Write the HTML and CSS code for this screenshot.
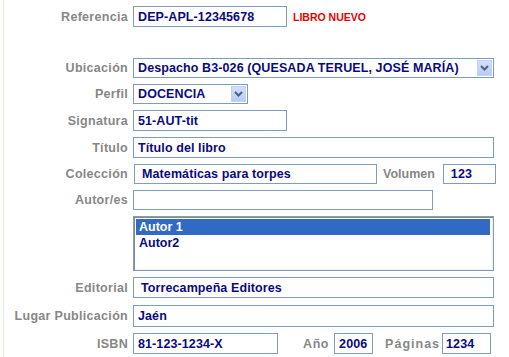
FILE: index.html
```html
<!DOCTYPE html>
<html lang="es">
<head>
    <meta charset="UTF-8">
    <meta name="viewport" content="width=device-width, initial-scale=1.0">
    <title>Ficha de libro</title>

    <link rel="stylesheet" href="styles.css">
</head>
<body>

    <div class="page">
        <form class="ficha">

            <div class="row row_ref">
                <label class="lbl">Referencia</label>
                <div class="field w_short">DEP-APL-12345678</div>
                <span class="nuevo">LIBRO NUEVO</span>
            </div>

            <div class="row row_sel">
                <label class="lbl">Ubicación</label>
                <div class="field select w_full">
                    <span class="select_text">Despacho B3-026 (QUESADA TERUEL, JOSÉ MARÍA)</span>
                    <span class="select_btn">
                        <svg width="9" height="6" viewBox="0 0 9 6"><path d="M1 1 L4.5 4.5 L8 1" fill="none" stroke="#4d6185" stroke-width="2"/></svg>
                    </span>
                </div>
            </div>

            <div class="row row_sel">
                <label class="lbl">Perfil</label>
                <div class="field select w_perfil">
                    <span class="select_text">DOCENCIA</span>
                    <span class="select_btn">
                        <svg width="9" height="6" viewBox="0 0 9 6"><path d="M1 1 L4.5 4.5 L8 1" fill="none" stroke="#4d6185" stroke-width="2"/></svg>
                    </span>
                </div>
            </div>

            <div class="row">
                <label class="lbl">Signatura</label>
                <div class="field w_short">51-AUT-tit</div>
            </div>

            <div class="row">
                <label class="lbl">Título</label>
                <div class="field w_full">Título del libro</div>
            </div>

            <div class="row row_sel">
                <label class="lbl">Colección</label>
                <div class="field w_coleccion pad">Matemáticas para torpes</div>
                <label class="lbl_inline lbl_vol">Volumen</label>
                <div class="field w_vol pad">123</div>
            </div>

            <div class="row row_sel">
                <label class="lbl">Autor/es</label>
                <div class="field w_autor"></div>
            </div>

            <div class="row row_list">
                <label class="lbl"></label>
                <div class="listbox w_full">
                    <div class="opt opt_sel">Autor 1</div>
                    <div class="opt">Autor2</div>
                </div>
            </div>

            <div class="row">
                <label class="lbl">Editorial</label>
                <div class="field w_full pad">Torrecampeña Editores</div>
            </div>

            <div class="row row_tall">
                <label class="lbl">Lugar Publicación</label>
                <div class="field w_full">Jaén</div>
            </div>

            <div class="row">
                <label class="lbl">ISBN</label>
                <div class="field w_isbn">81-123-1234-X</div>
                <label class="lbl_inline lbl_anio">Año</label>
                <div class="field w_anio">2006</div>
                <label class="lbl_inline lbl_pag">Páginas</label>
                <div class="field w_pag">1234</div>
            </div>

        </form>
    </div>

</body>
</html>
```

FILE: styles.css
```css
*,*::after,*::before{
    box-sizing: border-box;
    margin: 0;
    padding: 0;
}

body{
    background-color: #ffffff;
    padding-left: 3px;
    font-family: "Liberation Sans", Arial, sans-serif;
}

.page{
    border-left: 1px solid #ecece0;
    min-height: 357px;
    padding-top: 6px;
}

.ficha{
    display: flex;
    flex-direction: column;
    gap: 6px;
}

.row{
    display: flex;
    align-items: center;
    height: 21px;
}

.row_ref{
    margin-bottom: 25px;
}

.row_sel{
    height: 20px;
}

.row_tall{
    height: 22px;
    margin-top: 1px;
}

.row_list{
    height: 55px;
    align-items: stretch;
}

.lbl{
    flex: none;
    width: 125px;
    margin-right: 4px;
    padding-right: 1px;
    text-align: right;
    font-size: 12.5px;
    font-weight: bold;
    letter-spacing: 0.3px;
    color: #878787;
}

.lbl_inline{
    flex: none;
    font-size: 12.5px;
    font-weight: bold;
    letter-spacing: 0.1px;
    color: #878787;
}

.field{
    flex: none;
    height: 100%;
    border: 1px solid #7f9db9;
    background-color: #ffffff;
    padding-left: 4px;
    display: flex;
    align-items: center;
    font-size: 12.5px;
    font-weight: bold;
    letter-spacing: 0.1px;
    color: #0a0a80;
    white-space: nowrap;
    overflow: hidden;
}

.pad{
    padding-left: 7px;
}

.w_short{ width: 154px; }
.w_full{ width: 361px; }
.w_perfil{ width: 115px; }
.w_coleccion{ width: 243px; margin-left: 1px; }
.w_vol{ width: 53px; }
.w_autor{ width: 300px; }
.w_isbn{ width: 145px; }
.w_anio{ width: 39px; }
.w_pag{ width: 49px; padding-left: 3px; }

.lbl_vol{ margin: 0 8px 0 6px; letter-spacing: 0; }
.lbl_anio{ margin: 0 5px 0 25px; letter-spacing: 0.6px; }
.lbl_pag{ margin: 0 2px 0 12px; letter-spacing: 1px; }

.nuevo{
    margin-left: 6px;
    font-size: 10.5px;
    font-weight: bold;
    color: #e60000;
}

.select{
    justify-content: space-between;
    padding-right: 1px;
}

.select_btn{
    width: 15px;
    height: 16px;
    background: linear-gradient(#d3def9, #b8cbf4);
    border: 1px solid #c3d2f5;
    display: flex;
    align-items: center;
    justify-content: center;
}

.listbox{
    flex: none;
    border: 1px solid #7f9db9;
    box-shadow: inset 1px 1px 0 #8a8a8a, inset -1px -1px 0 #f1efe2;
    background-color: #ffffff;
    padding: 2px 3px 0 2px;
    font-size: 12.5px;
    font-weight: bold;
    color: #0a0a80;
}

.opt{
    height: 16px;
    line-height: 16px;
    padding-left: 3px;
}

.opt_sel{
    background-color: #316ac5;
    color: #ffffff;
}
```
